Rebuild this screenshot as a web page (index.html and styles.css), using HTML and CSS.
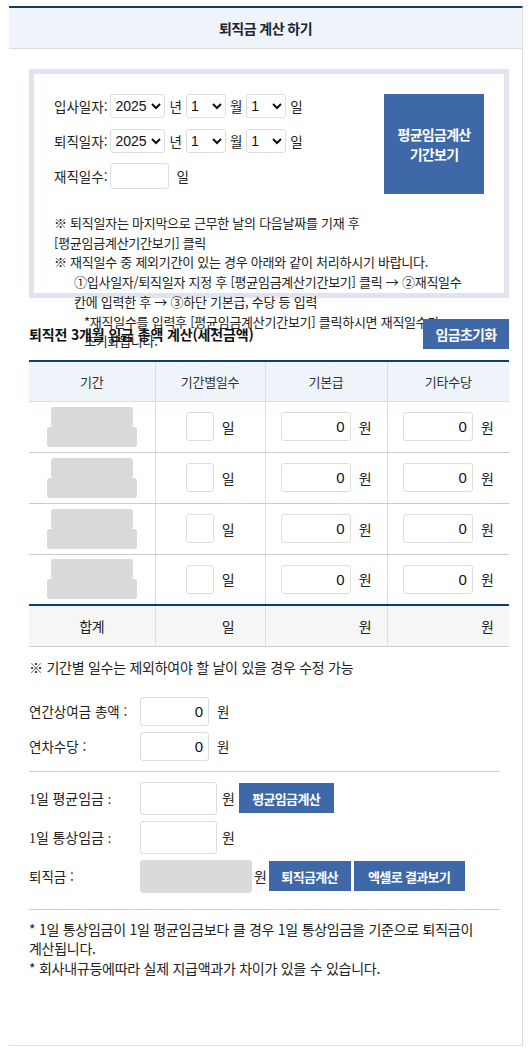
FILE: index.html
```html
<!DOCTYPE html>
<html lang="ko">
<head>
	<meta charset="UTF-8">
	<title>퇴직금 계산 하기</title>
	<link rel="stylesheet" href="styles.css">
</head>
<body>
	<div class="wrap">
		<div class="title">퇴직금 계산 하기</div>
		<div class="content">
			<!-- 기간 입력 -->
			<div class="infoBox">
				<div class="infoTop">
					<div class="dates">
						<div class="dateRow">
							<span class="lbl">입사일자:</span>
							<select class="selYear"><option>2025</option><option>2024</option></select>
							<span>년</span>
							<select class="selMd"><option>1</option><option>2</option></select>
							<span>월</span>
							<select class="selMd"><option>1</option><option>2</option></select>
							<span>일</span>
						</div>
						<div class="dateRow">
							<span class="lbl">퇴직일자:</span>
							<select class="selYear"><option>2025</option><option>2024</option></select>
							<span>년</span>
							<select class="selMd"><option>1</option><option>2</option></select>
							<span>월</span>
							<select class="selMd"><option>1</option><option>2</option></select>
							<span>일</span>
						</div>
						<div class="dateRow">
							<span class="lbl">재직일수:</span>
							<input type="text" class="workDays">
							<span>일</span>
						</div>
					</div>
					<button class="btn periodBtn">평균임금계산<br>기간보기</button>
				</div>
				<div class="infoNotes">
					<p>※ 퇴직일자는 마지막으로 근무한 날의 다음날짜를 기재 후<br>[평균임금계산기간보기] 클릭</p>
					<p>※ 재직일수 중 제외기간이 있는 경우 아래와 같이 처리하시기 바랍니다.</p>
					<p class="sub">①입사일자/퇴직일자 지정 후 [평균임금계산기간보기] 클릭 → ②재직일수<br>칸에 입력한 후 → ③하단 기본급, 수당 등 입력</p>
					<p class="sub2">*재직일수를 입력후 [평균임금계산기간보기] 클릭하시면 재직일수가<br>초기화됩니다.</p>
				</div>
			</div>

			<div class="secHead">
				<h3>퇴직전 3개월 임금 총액 계산(세전금액)</h3>
				<button class="btn resetBtn">임금초기화</button>
			</div>

			<table class="wageTable">
				<colgroup>
					<col style="width:126px"><col style="width:110px"><col style="width:122px"><col style="width:122px">
				</colgroup>
				<thead>
					<tr><th>기간</th><th>기간별일수</th><th>기본급</th><th>기타수당</th></tr>
				</thead>
				<tbody>
					<tr>
						<td><div class="period"><span class="p1"></span><span class="p2"></span></div></td>
						<td><div class="cell"><input type="text" class="dayIn"><span>일</span></div></td>
						<td><div class="cell"><input type="text" class="wonIn" value="0"><span>원</span></div></td>
						<td><div class="cell"><input type="text" class="wonIn" value="0"><span>원</span></div></td>
					</tr>
					<tr>
						<td><div class="period"><span class="p1"></span><span class="p2"></span></div></td>
						<td><div class="cell"><input type="text" class="dayIn"><span>일</span></div></td>
						<td><div class="cell"><input type="text" class="wonIn" value="0"><span>원</span></div></td>
						<td><div class="cell"><input type="text" class="wonIn" value="0"><span>원</span></div></td>
					</tr>
					<tr>
						<td><div class="period"><span class="p1"></span><span class="p2"></span></div></td>
						<td><div class="cell"><input type="text" class="dayIn"><span>일</span></div></td>
						<td><div class="cell"><input type="text" class="wonIn" value="0"><span>원</span></div></td>
						<td><div class="cell"><input type="text" class="wonIn" value="0"><span>원</span></div></td>
					</tr>
					<tr>
						<td><div class="period"><span class="p1"></span><span class="p2"></span></div></td>
						<td><div class="cell"><input type="text" class="dayIn"><span>일</span></div></td>
						<td><div class="cell"><input type="text" class="wonIn" value="0"><span>원</span></div></td>
						<td><div class="cell"><input type="text" class="wonIn" value="0"><span>원</span></div></td>
					</tr>
				</tbody>
				<tfoot>
					<tr>
						<td>합계</td>
						<td><div class="cell"><span class="sumDay"></span><span>일</span></div></td>
						<td><div class="cell"><span class="sumWon"></span><span>원</span></div></td>
						<td><div class="cell"><span class="sumWon"></span><span>원</span></div></td>
					</tr>
				</tfoot>
			</table>

			<p class="tip">※ 기간별 일수는 제외하여야 할 날이 있을 경우 수정 가능</p>

			<div class="formRows bonus">
				<div class="fRow"><span class="fLbl">연간상여금 총액 :</span><input type="text" class="bonusIn" value="0"><span>원</span></div>
				<div class="fRow"><span class="fLbl">연차수당 :</span><input type="text" class="bonusIn" value="0"><span>원</span></div>
			</div>
			<div class="line"></div>
			<div class="formRows result">
				<div class="fRow"><span class="fLbl serif">1일 평균임금 :</span><input type="text" class="resIn"><span class="unit">원</span><button class="btn smBtn avgBtn">평균임금계산</button></div>
				<div class="fRow"><span class="fLbl serif">1일 통상임금 :</span><input type="text" class="resIn"><span class="unit">원</span></div>
				<div class="fRow"><span class="fLbl">퇴직금 :</span><input type="text" class="totalIn" readonly><span class="unit">원</span><button class="btn smBtn calcBtn">퇴직금계산</button><button class="btn smBtn xlsBtn">엑셀로 결과보기</button></div>
			</div>
			<div class="line lineBottom"></div>
			<div class="footNotes">
				<p>* 1일 통상임금이 1일 평균임금보다 클 경우 1일 통상임금을 기준으로 퇴직금이 계산됩니다.</p>
				<p>* 회사내규등에따라 실제 지급액과가 차이가 있을 수 있습니다.</p>
			</div>
		</div>
	</div>
</body>
</html>
```
FILE: styles.css
```css
*{
	margin:0;
	padding:0;
	box-sizing:border-box;
}
body{
	font-family:"Noto Sans CJK KR",sans-serif;
	font-size:13px;
	color:#222;
	background:#fff;
	letter-spacing:-0.02em;
	word-break:keep-all;
}
.wrap{
	margin:6px 0 0 9px;
	width:514px;
	height:1040px;
	border-top:2px solid #123c69;
	border-right:1px solid #ddd;
	border-bottom:1px solid #ddd;
}
.title{
	height:41px;
	line-height:40px;
	background:#eff3fa;
	border-bottom:1px solid #dcdcdc;
	text-align:center;
	font-size:14px;
	font-weight:bold;
	color:#1c2533;
	letter-spacing:-0.04em;
}
.content{
	padding:20px 0 0 20px;
}
/*-------------------------info box----------------*/
.infoBox{
	width:480px;
	height:229px;
	border:5px solid #dfe4f0;
	padding:20px 20px 0 20px;
}
.infoTop{
	display:flex;
	justify-content:space-between;
}
.dates{
	display:flex;
	flex-direction:column;
	gap:11px;
	font-size:13.5px;
	letter-spacing:0;
}
.dateRow{
	display:flex;
	align-items:center;
	gap:4px;
	height:24px;
}
.dateRow .lbl{
	margin-right:-1px;
}
select{
	height:24px;
	border:1px solid #ddd;
	border-radius:3px;
	font-family:"Liberation Sans",sans-serif;
	font-size:14px;
	color:#111;
	background:#fff;
	padding:0;
}
.selYear{
	width:55px;
}
.selMd{
	width:40px;
}
.workDays{
	width:59px;
	height:26px;
	margin-right:3px;
}
input{
	border:1px solid #ddd;
	border-radius:3px;
	background:#fff;
	font-family:"Liberation Sans",sans-serif;
	font-size:15px;
	color:#111;
	text-align:right;
	padding-right:5px;
}
.btn{
	background:#3f68a8;
	color:#fff;
	border:none;
	font-family:"Noto Sans CJK KR",sans-serif;
	font-weight:bold;
	font-size:14px;
	letter-spacing:-0.05em;
	cursor:pointer;
}
.periodBtn{
	width:100px;
	height:100px;
	line-height:20px;
}
.infoNotes{
	margin-top:19px;
	line-height:19.7px;
	white-space:nowrap;
}
.infoNotes .sub{
	padding-left:20px;
}
.infoNotes .sub2{
	padding-left:30px;
}
/*-------------------------임금 표----------------*/
.secHead{
	margin-top:21px;
	width:480px;
	height:30px;
	display:flex;
	justify-content:space-between;
	align-items:center;
}
.secHead h3{
	font-size:14px;
	font-weight:bold;
	letter-spacing:-0.01em;
	color:#111;
}
.resetBtn{
	width:86px;
	height:30px;
}
.wageTable{
	margin-top:11px;
	width:480px;
	border-collapse:collapse;
	table-layout:fixed;
	border-top:2px solid #123c69;
}
.wageTable th{
	height:40px;
	background:#eff3fa;
	font-weight:normal;
	font-size:13px;
	color:#333;
	border-bottom:1px solid #ddd;
	border-left:1px solid #ddd;
}
.wageTable td{
	height:51px;
	border-bottom:1px solid #ccc;
	border-left:1px solid #ddd;
	text-align:center;
	font-size:14px;
}
.wageTable th:first-child,.wageTable td:first-child{
	border-left:none;
}
.wageTable tfoot td{
	height:41px;
	background:#f6f6f6;
	border-top:2px solid #123c69;
	border-bottom:1px solid #ccc;
}
.period{
	display:flex;
	flex-direction:column;
	align-items:center;
}
.period span{
	display:block;
	height:20px;
	background:#d9d9d9;
	border-radius:3px;
}
.period .p1{
	width:82px;
}
.period .p2{
	width:90px;
}
.cell{
	display:flex;
	justify-content:center;
	align-items:center;
	gap:8px;
}
.dayIn,.sumDay{
	width:28px;
	height:29px;
}
.wonIn,.sumWon{
	width:70px;
	height:29px;
}
.sumDay,.sumWon{
	display:block;
}
.tip{
	margin-top:10px;
	line-height:20px;
	font-size:14px;
}
/*-------------------------하단 입력----------------*/
.formRows{
	display:flex;
	flex-direction:column;
	gap:6px;
	font-size:13.5px;
}
.bonus{
	margin-top:20px;
}
.fRow{
	display:flex;
	align-items:center;
}
.fLbl{
	width:111px;
	letter-spacing:0;
}
.serif{
	font-family:"Liberation Serif","Noto Sans CJK KR",serif;
	font-size:14px;
}
.bonusIn{
	width:69px;
	height:29px;
	margin-right:8px;
}
.line{
	width:471px;
	height:1px;
	background:#ccc;
	margin-top:10px;
}
.line.lineBottom{
	margin-top:16px;
}
.result{
	margin-top:10px;
}
.resIn{
	width:77px;
	height:33px;
}
.totalIn{
	width:112px;
	height:33px;
	background:#dadada;
	border-color:#dadada;
}
.unit{
	margin:0 4px 0 5px;
	font-size:14px;
}
.totalIn + .unit{
	margin:0 2px 0 2px;
}
.smBtn{
	height:30px;
	font-size:13px;
}
.avgBtn{
	width:95px;
}
.calcBtn{
	width:82px;
	margin-right:3px;
}
.xlsBtn{
	width:111px;
}
.footNotes{
	margin-top:10px;
	width:471px;
	line-height:19.5px;
	font-size:14px;
}
```
